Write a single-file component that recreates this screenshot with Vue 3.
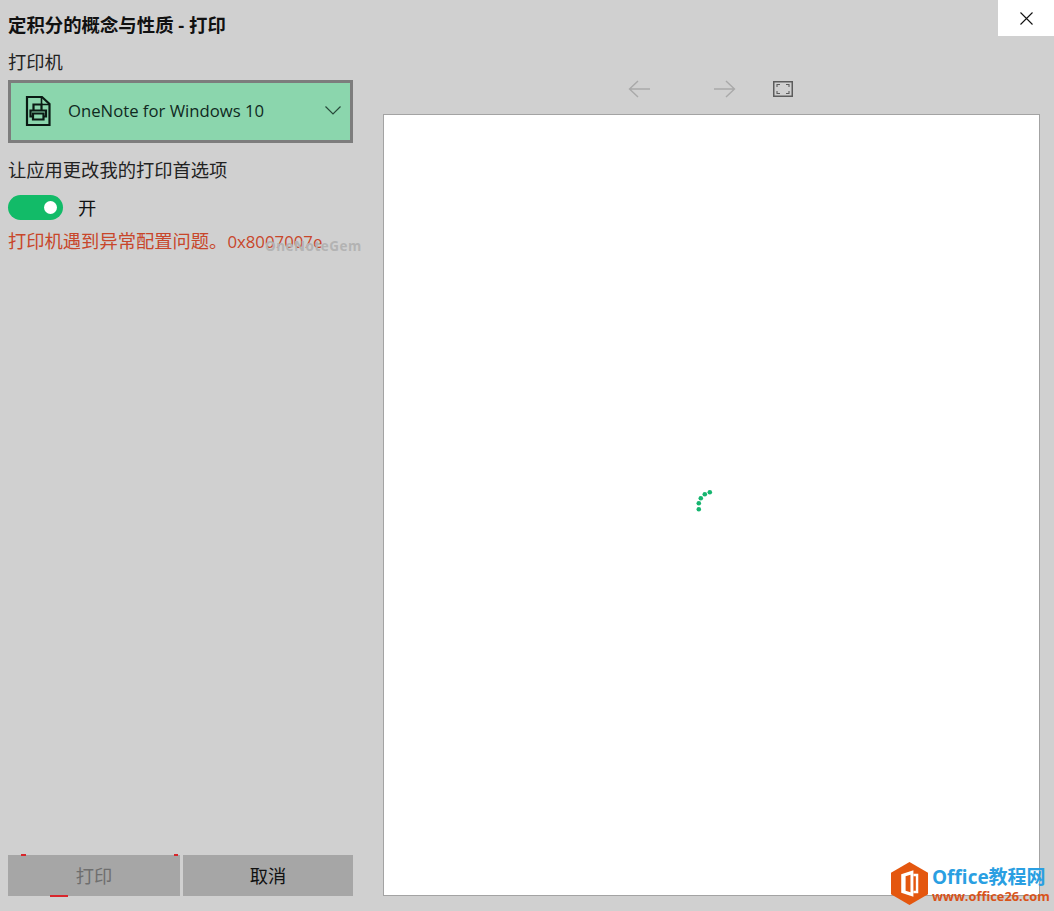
<template>
  <div class="print-page">
    <!-- 左边的设置栏 -->
    <aside class="side">
      <h1 class="title">定积分的概念与性质 - 打印</h1>
      <div class="label">打印机</div>
      <div class="printer-select">
        <svg class="printer-icon" viewBox="0 0 26 32" fill="none" stroke="#0b1a14" stroke-width="2.200">
          <path d="M2 2H17L24.500 9V30H2Z" />
          <path d="M16.500 2V9.500H24.500" stroke-width="1.600" />
          <path d="M8.500 15V9.500H16.500V15" />
          <path d="M8 21.500H5.500V15.500H21V21.500H18.500" />
          <path d="M8 18.500H18.500V24.500H8Z" />
        </svg>
        <span class="printer-name">OneNote for Windows 10</span>
        <svg class="chevron" viewBox="0 0 16 9" fill="none" stroke="#27493a" stroke-width="1.200">
          <path d="M0.500 0.500L8 8L15.500 0.500" />
        </svg>
      </div>
      <div class="label pref-label">让应用更改我的打印首选项</div>
      <div class="toggle-row">
        <span class="toggle"><span class="knob"></span></span>
        <span class="toggle-text">开</span>
      </div>
      <div class="error-row">
        <span class="error">打印机遇到异常配置问题。<span class="error-code">0x8007007e</span></span>
        <span class="watermark">OneNoteGem</span>
      </div>
      <div class="buttons">
        <button class="btn btn-print">
          打印
          <i class="mark mark-a"></i>
          <i class="mark mark-b"></i>
          <i class="mark mark-c"></i>
        </button>
        <button class="btn">取消</button>
      </div>
    </aside>

    <!-- 右边的预览 -->
    <main class="preview-side">
      <div class="top-row">
        <button class="close-btn">
          <svg viewBox="0 0 13 13" width="13" height="13" fill="none" stroke="#111" stroke-width="1.100">
            <path d="M0.500 0.500L12.500 12.500M12.500 0.500L0.500 12.500" />
          </svg>
        </button>
      </div>
      <div class="toolbar">
        <svg class="arrow" viewBox="0 0 22 18" fill="none" stroke="#a9a9a9" stroke-width="1.400">
          <path d="M22 9H1.500M10 1L1.500 9L10 17" />
        </svg>
        <svg class="arrow arrow-next" viewBox="0 0 22 18" fill="none" stroke="#a9a9a9" stroke-width="1.400">
          <path d="M0 9H20.500M12 1L20.500 9L12 17" />
        </svg>
        <svg class="fit" viewBox="0 0 20 16" fill="none" stroke="#5c5c5c">
          <rect x="0.750" y="0.750" width="18.500" height="14.500" stroke-width="1.500" />
          <path d="M4 6V3.500H7M13 3.500H16V6M16 10V12.500H13M7 12.500H4V10" stroke-width="1.100" />
        </svg>
      </div>
      <div class="sheet">
        <svg class="spinner" viewBox="0 0 28 28" width="28" height="28" fill="#15b56f">
          <circle v-for="(d, i) in dots" :key="i" :cx="d[0]" :cy="d[1]" r="2.300" />
        </svg>
      </div>
    </main>

    <!-- 盖在截图上的水印 -->
    <div class="logo">
      <svg class="logo-mark" viewBox="0 0 38 44">
        <path d="M19 0L38 11V33L19 44L0 33V11Z" fill="#e4570f" />
        <path d="M10.500 12.500L23 8.500V35.500L10.500 31.500Z M15 14.500V29.500L20 31V13Z" fill="#fff" fill-rule="evenodd" />
        <path d="M23 12H28V32H23Z M23 14.500V29.500H25.500V14.500Z" fill="#fff" fill-rule="evenodd" />
      </svg>
      <div class="logo-text">
        <div class="logo-top">Office教程网</div>
        <div class="logo-url">www.office26.com</div>
      </div>
    </div>
  </div>
</template>

<script setup>
const dots = [
  [0.8, 18.3],
  [0.8, 12.3],
  [2.8, 7.3],
  [6.8, 3.3],
  [11.8, 1.3],
]
</script>

<style>
html,
body {
  margin: 0;
  background: #d0d0d0;
}
</style>

<style scoped>
.print-page {
  position: relative;
  display: flex;
  width: 1054px;
  height: 911px;
  overflow: hidden;
  background: #d0d0d0;
  color: #111;
  font-family: "Open Sans", "Noto Sans CJK SC", sans-serif;
}

.side {
  display: flex;
  flex-direction: column;
  box-sizing: border-box;
  width: 383px;
  padding: 0 30px 15px 8px;
}

.title {
  margin: 12px 0 0;
  font-size: 18.400px;
  line-height: 26px;
  font-weight: 700;
  white-space: nowrap;
}

.label {
  margin-top: 11px;
  font-size: 18.300px;
  line-height: 26px;
  color: #222;
}

.printer-select {
  display: flex;
  align-items: center;
  box-sizing: border-box;
  height: 63px;
  margin-top: 5px;
  padding: 0 9px 2px 14px;
  border: 3px solid #7d7d7d;
  background: #8bd6ad;
}

.printer-icon {
  width: 26px;
  height: 32px;
}

.printer-name {
  margin-left: 17px;
  font-size: 16.700px;
  color: #10291f;
  white-space: nowrap;
}

.chevron {
  width: 16px;
  height: 9px;
  margin-left: auto;
}

.pref-label {
  margin-top: 14px;
}

.toggle-row {
  display: flex;
  align-items: center;
  margin-top: 11px;
}

.toggle {
  display: flex;
  align-items: center;
  justify-content: flex-end;
  box-sizing: border-box;
  width: 55px;
  height: 25px;
  padding-right: 6px;
  border-radius: 13px;
  background: #12bb68;
}

.knob {
  width: 13px;
  height: 13px;
  border-radius: 50%;
  background: #fff;
}

.toggle-text {
  margin-left: 15px;
  font-size: 18.300px;
}

.error-row {
  position: relative;
  margin-top: 8px;
  line-height: 26px;
}

.error {
  font-size: 18.300px;
  color: #c8462a;
  white-space: nowrap;
}

.error-code {
  font-size: 16.800px;
}

.watermark {
  position: absolute;
  left: 257px;
  top: 5px;
  font-size: 13.500px;
  font-weight: 700;
  letter-spacing: 0.500px;
  color: #b3b3b3;
}

.buttons {
  display: flex;
  gap: 3px;
  margin-top: auto;
}

.btn {
  position: relative;
  flex: 1;
  height: 41px;
  padding: 0 0 2px;
  border: none;
  background: #a6a6a6;
  color: #111;
  font-family: inherit;
  font-size: 18.300px;
}

.btn-print {
  flex: 0 0 172px;
  color: #6e6e6e;
}

.mark {
  position: absolute;
  height: 2px;
  background: #d8262c;
}

.mark-a {
  left: 13px;
  top: -1px;
  width: 5px;
}

.mark-b {
  right: 2px;
  top: -1px;
  width: 4px;
}

.mark-c {
  left: 42px;
  bottom: -1px;
  width: 18px;
}

.preview-side {
  display: flex;
  flex: 1;
  flex-direction: column;
  padding-bottom: 15px;
}

.top-row {
  display: flex;
  justify-content: flex-end;
}

.close-btn {
  display: flex;
  align-items: center;
  justify-content: center;
  width: 56px;
  height: 36px;
  padding: 0;
  border: none;
  background: #fff;
}

.toolbar {
  display: flex;
  align-items: center;
  box-sizing: border-box;
  height: 78px;
  padding: 44px 0 16px 245px;
}

.arrow {
  width: 22px;
  height: 18px;
}

.arrow-next {
  margin-left: 64px;
}

.fit {
  width: 20px;
  height: 16px;
  margin-left: 37px;
}

.sheet {
  display: flex;
  flex: 1;
  align-items: center;
  justify-content: center;
  margin-right: 14px;
  border: 1px solid #a3a3a3;
  background: #fff;
}

.spinner {
  display: block;
  overflow: visible;
}

.logo {
  position: absolute;
  left: 891px;
  top: 862px;
  display: flex;
  gap: 4px;
}

.logo-mark {
  width: 37px;
  height: 43px;
}

.logo-text {
  display: flex;
  flex-direction: column;
  margin-top: 4px;
  font-family: "Open Sans", "Noto Sans CJK SC", sans-serif;
  font-weight: 700;
  white-space: nowrap;
}

.logo-top {
  font-size: 19px;
  line-height: 23px;
  color: #2a9fe2;
}

.logo-url {
  font-size: 12.800px;
  line-height: 15px;
  color: #d9541a;
}
</style>
